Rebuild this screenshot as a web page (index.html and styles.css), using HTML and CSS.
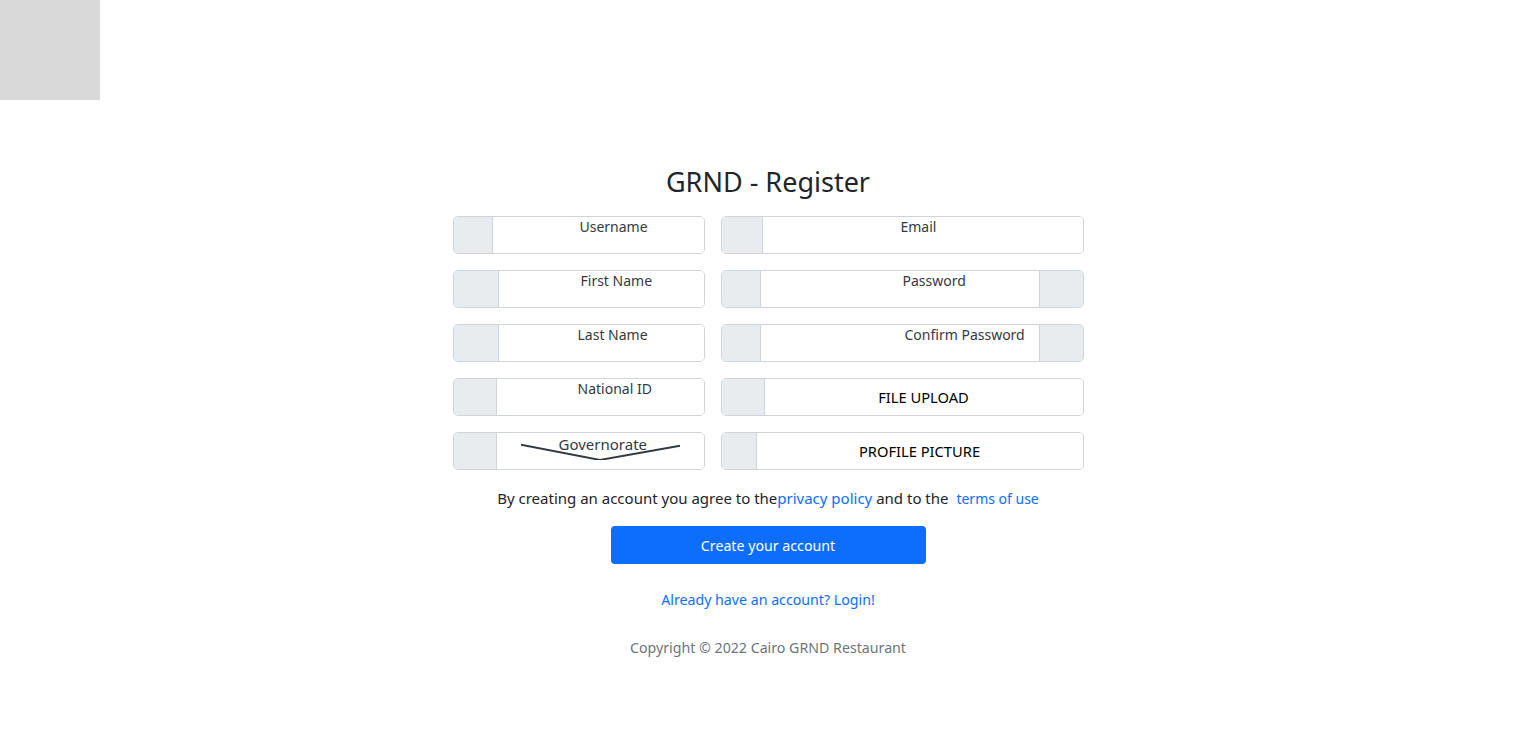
FILE: index.html
```html
<!DOCTYPE html>
<html>
<head>
<meta charset="utf-8">
<title>GRND - Register</title>
<link rel="stylesheet" href="styles.css">
</head>
<body>
<div class="logo-box"></div>
<main class="page">
  <h1 class="title">GRND - Register</h1>
  <form class="form">
    <div class="col col-left">
      <div class="group"><span class="addon w40"></span><div class="field"><span class="ph">Username</span></div></div>
      <div class="group"><span class="addon w46"></span><div class="field"><span class="ph">First Name</span></div></div>
      <div class="group"><span class="addon w46"></span><div class="field"><span class="ph">Last Name</span></div></div>
      <div class="group"><span class="addon w44"></span><div class="field"><span class="ph">National ID</span></div></div>
      <div class="group"><span class="addon w44"></span><div class="field select">
        <svg class="chev" viewBox="0 0 160 20" preserveAspectRatio="none"><path d="M0 4 L79 20 L159 5" fill="none" stroke="#343a40" stroke-width="2"/></svg>
        <span class="ph sel">Governorate</span></div></div>
    </div>
    <div class="col col-right">
      <div class="group"><span class="addon w42"></span><div class="field"><span class="ph">Email</span></div></div>
      <div class="group"><span class="addon w40"></span><div class="field"><span class="ph">Password</span></div><span class="addon addon-end"></span></div>
      <div class="group"><span class="addon w40"></span><div class="field"><span class="ph">Confirm Password</span></div><span class="addon addon-end"></span></div>
      <div class="group"><span class="addon w44"></span><div class="field file">FILE UPLOAD</div></div>
      <div class="group"><span class="addon w36"></span><div class="field file">PROFILE PICTURE</div></div>
    </div>
  </form>
  <p class="agree">By creating an account you agree to the<a href="#" class="link">privacy policy</a> and to the <a href="#" class="link small">terms of use</a></p>
  <button class="btn" type="button">Create your account</button>
  <a href="#" class="login">Already have an account? Login!</a>
  <p class="copy">Copyright © 2022 Cairo GRND Restaurant</p>
</main>
</body>
</html>
```

FILE: styles.css
```css
* { box-sizing: border-box; }
html, body { margin: 0; padding: 0; }
body {
  font-family: "Noto Sans", "Open Sans", sans-serif;
  color: #212529;
  background: #fff;
  font-size: 15px;
}
.logo-box {
  width: 100px;
  height: 100px;
  background: #d9d9d9;
}
.page {
  display: flex;
  flex-direction: column;
  align-items: center;
  padding-top: 62px;
}
.title {
  margin: 0;
  font-weight: 400;
  font-size: 27px;
  line-height: 40px;
  height: 54px;
}
.form {
  display: flex;
  gap: 16px;
  width: 631px;
}
.col {
  display: flex;
  flex-direction: column;
  gap: 16px;
}
.col-left { width: 252px; }
.col-right { width: 363px; }
.group {
  position: relative;
  display: flex;
  height: 38px;
  border: 1px solid #ced4da;
  border-radius: 5px;
  overflow: hidden;
}
.addon {
  flex: none;
  background: #e9ecef;
  border-right: 1px solid #ced4da;
}
.addon-end {
  width: 44px;
  border-right: none;
  border-left: 1px solid #ced4da;
}
.w36 { width: 35px; }
.w40 { width: 39px; }
.w42 { width: 41px; }
.w44 { width: 43px; }
.w46 { width: 45px; }
.field {
  flex: 1;
  position: relative;
  background: #fff;
}
.ph {
  position: absolute;
  top: 1px;
  font-size: 14px;
  line-height: 18px;
  color: #343a40;
  white-space: nowrap;
}
.col-left .group:nth-child(1) .ph { left: 87px; }
.col-left .group:nth-child(2) .ph { left: 82px; }
.col-left .group:nth-child(3) .ph { left: 79px; }
.col-left .group:nth-child(4) .ph { left: 81px; }
.col-right .group:nth-child(1) .ph { left: 138px; }
.col-right .group:nth-child(2) .ph { left: 142px; }
.col-right .group:nth-child(3) .ph { left: 144px; }
.ph.sel {
  left: 62px;
  top: 2px;
  font-size: 15px;
}
.chev {
  position: absolute;
  left: 24px;
  top: 8px;
  width: 160px;
  height: 19px;
}
.file {
  display: flex;
  align-items: center;
  justify-content: center;
  font-size: 14.7px;
  color: #000;
  padding-bottom: 1px;
}
.agree {
  margin: 18px 0 0;
  font-size: 15px;
  line-height: 20px;
}
.link {
  color: #0d6efd;
  text-decoration: none;
}
.link.small { font-size: 14px; margin-left: 4px; }
.btn {
  margin-top: 17px;
  width: 315px;
  height: 38px;
  border: none;
  border-radius: 4px;
  background: #0d6efd;
  color: #fff;
  font-family: inherit;
  font-size: 14.2px;
}
.login {
  margin-top: 26px;
  color: #0d6efd;
  text-decoration: none;
  font-size: 14.2px;
  line-height: 20px;
}
.copy {
  margin: 28px 0 0;
  color: #6c757d;
  font-size: 14.2px;
  line-height: 20px;
}
```
